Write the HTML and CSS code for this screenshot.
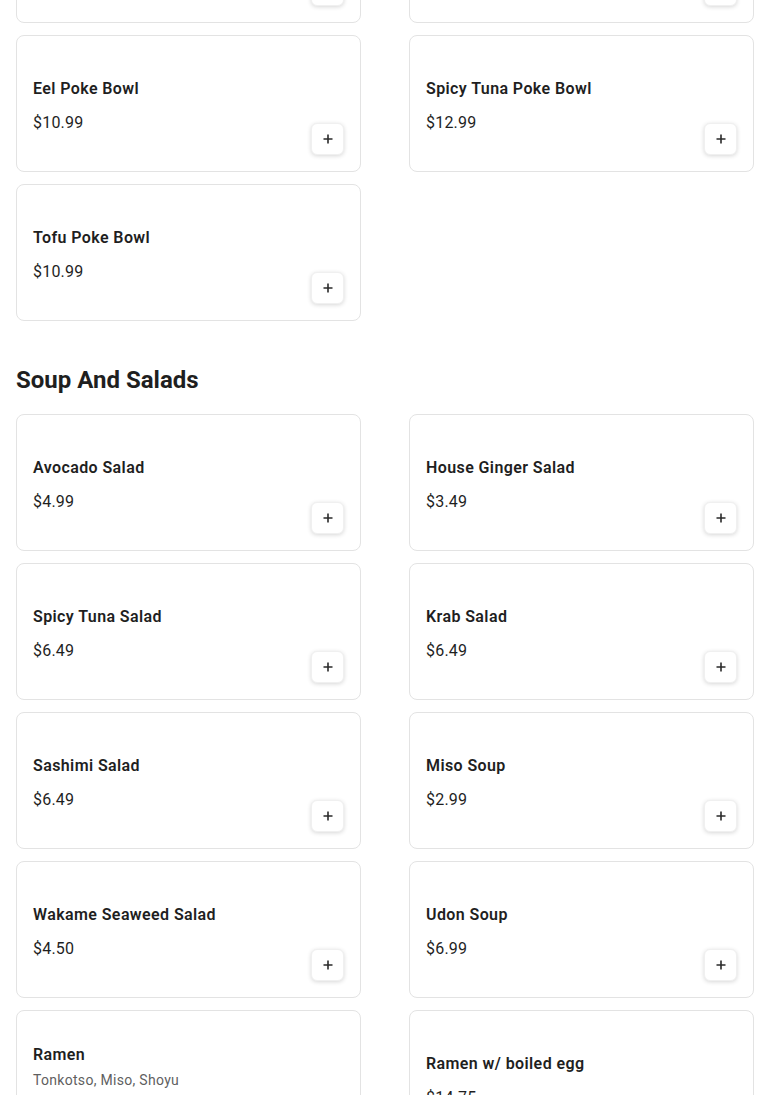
FILE: index.html
```html
<!DOCTYPE html>
<html lang="en">
    <head>
        <meta charset="utf-8" />
        <title>Menu</title>
        <link rel="stylesheet" href="styles.css">
    </head>
    <body>
        <div class="menu">
            <!-- Poke Bowls -->
            <section class="section first">
                <div class="grid">
                    <div class="card">
                        <div class="info">
                            <h3 class="name">Salmon Poke Bowl</h3>
                            <p class="price">$12.99</p>
                        </div>
                        <button class="add" type="button"><svg viewBox="0 0 12 12" width="12" height="12"><path d="M6 1.5v9M1.5 6h9"/></svg></button>
                    </div>
                    <div class="card">
                        <div class="info">
                            <h3 class="name">Tuna Poke Bowl</h3>
                            <p class="price">$12.99</p>
                        </div>
                        <button class="add" type="button"><svg viewBox="0 0 12 12" width="12" height="12"><path d="M6 1.5v9M1.5 6h9"/></svg></button>
                    </div>
                    <div class="card">
                        <div class="info">
                            <h3 class="name">Eel Poke Bowl</h3>
                            <p class="price">$10.99</p>
                        </div>
                        <button class="add" type="button"><svg viewBox="0 0 12 12" width="12" height="12"><path d="M6 1.5v9M1.5 6h9"/></svg></button>
                    </div>
                    <div class="card">
                        <div class="info">
                            <h3 class="name">Spicy Tuna Poke Bowl</h3>
                            <p class="price">$12.99</p>
                        </div>
                        <button class="add" type="button"><svg viewBox="0 0 12 12" width="12" height="12"><path d="M6 1.5v9M1.5 6h9"/></svg></button>
                    </div>
                    <div class="card">
                        <div class="info">
                            <h3 class="name">Tofu Poke Bowl</h3>
                            <p class="price">$10.99</p>
                        </div>
                        <button class="add" type="button"><svg viewBox="0 0 12 12" width="12" height="12"><path d="M6 1.5v9M1.5 6h9"/></svg></button>
                    </div>
                </div>
            </section>

            <!-- Soup And Salads -->
            <section class="section">
                <h2 class="title">Soup And Salads</h2>
                <div class="grid">
                    <div class="card">
                        <div class="info">
                            <h3 class="name">Avocado Salad</h3>
                            <p class="price">$4.99</p>
                        </div>
                        <button class="add" type="button"><svg viewBox="0 0 12 12" width="12" height="12"><path d="M6 1.5v9M1.5 6h9"/></svg></button>
                    </div>
                    <div class="card">
                        <div class="info">
                            <h3 class="name">House Ginger Salad</h3>
                            <p class="price">$3.49</p>
                        </div>
                        <button class="add" type="button"><svg viewBox="0 0 12 12" width="12" height="12"><path d="M6 1.5v9M1.5 6h9"/></svg></button>
                    </div>
                    <div class="card">
                        <div class="info">
                            <h3 class="name">Spicy Tuna Salad</h3>
                            <p class="price">$6.49</p>
                        </div>
                        <button class="add" type="button"><svg viewBox="0 0 12 12" width="12" height="12"><path d="M6 1.5v9M1.5 6h9"/></svg></button>
                    </div>
                    <div class="card">
                        <div class="info">
                            <h3 class="name">Krab Salad</h3>
                            <p class="price">$6.49</p>
                        </div>
                        <button class="add" type="button"><svg viewBox="0 0 12 12" width="12" height="12"><path d="M6 1.5v9M1.5 6h9"/></svg></button>
                    </div>
                    <div class="card">
                        <div class="info">
                            <h3 class="name">Sashimi Salad</h3>
                            <p class="price">$6.49</p>
                        </div>
                        <button class="add" type="button"><svg viewBox="0 0 12 12" width="12" height="12"><path d="M6 1.5v9M1.5 6h9"/></svg></button>
                    </div>
                    <div class="card">
                        <div class="info">
                            <h3 class="name">Miso Soup</h3>
                            <p class="price">$2.99</p>
                        </div>
                        <button class="add" type="button"><svg viewBox="0 0 12 12" width="12" height="12"><path d="M6 1.5v9M1.5 6h9"/></svg></button>
                    </div>
                    <div class="card">
                        <div class="info">
                            <h3 class="name">Wakame Seaweed Salad</h3>
                            <p class="price">$4.50</p>
                        </div>
                        <button class="add" type="button"><svg viewBox="0 0 12 12" width="12" height="12"><path d="M6 1.5v9M1.5 6h9"/></svg></button>
                    </div>
                    <div class="card">
                        <div class="info">
                            <h3 class="name">Udon Soup</h3>
                            <p class="price">$6.99</p>
                        </div>
                        <button class="add" type="button"><svg viewBox="0 0 12 12" width="12" height="12"><path d="M6 1.5v9M1.5 6h9"/></svg></button>
                    </div>
                    <div class="card">
                        <div class="info">
                            <h3 class="name">Ramen</h3>
                            <p class="desc">Tonkotso, Miso, Shoyu</p>
                            <p class="price">$13.99</p>
                        </div>
                        <button class="add" type="button"><svg viewBox="0 0 12 12" width="12" height="12"><path d="M6 1.5v9M1.5 6h9"/></svg></button>
                    </div>
                    <div class="card">
                        <div class="info">
                            <h3 class="name">Ramen w/ boiled egg</h3>
                            <p class="price">$14.75</p>
                        </div>
                        <button class="add" type="button"><svg viewBox="0 0 12 12" width="12" height="12"><path d="M6 1.5v9M1.5 6h9"/></svg></button>
                    </div>
                </div>
            </section>
        </div>
    </body>
</html>
```

FILE: styles.css
```css
body {
    margin: 0;
    background-color: #fff;
    color: #1f1f1f;
    font-family: Roboto, "Noto Sans", Arial, sans-serif;
}
.menu {
    padding: 0 16px 40px 16px;
}
.section.first {
    margin-top: -114px;
}
.title {
    margin: 43px 0 18px 0;
    font-size: 24px;
    line-height: 32px;
    font-weight: 700;
    color: #1f1f1f;
}
.grid {
    display: grid;
    grid-template-columns: 1fr 1fr;
    column-gap: 48px;
    row-gap: 12px;
}
.card {
    display: flex;
    align-items: center;
    min-height: 137px;
    box-sizing: border-box;
    padding: 16px;
    border: 1px solid #e3e3e3;
    border-radius: 8px;
    background-color: #fff;
}
.info {
    flex: 1;
    padding-top: 4px;
}
.name {
    margin: 0;
    font-size: 16px;
    line-height: 24px;
    font-weight: 600;
    letter-spacing: 0.4px;
}
.desc {
    margin: 4px 0 0 0;
    font-size: 14px;
    line-height: 18px;
    letter-spacing: 0.3px;
    color: #5f5f5f;
}
.price {
    margin: 10px 0 0 0;
    font-size: 16px;
    line-height: 24px;
    letter-spacing: 0.2px;
}
.desc + .price {
    margin-top: 6px;
}
.add {
    align-self: flex-end;
    display: flex;
    align-items: center;
    justify-content: center;
    width: 33px;
    height: 32px;
    padding: 0;
    border: 1px solid #f0f0f0;
    border-radius: 6px;
    background-color: #fff;
    box-shadow: 0 1px 4px rgba(0, 0, 0, 0.16);
}
.add svg {
    stroke: #2a2a2a;
    stroke-width: 1.6;
    fill: none;
}
```
